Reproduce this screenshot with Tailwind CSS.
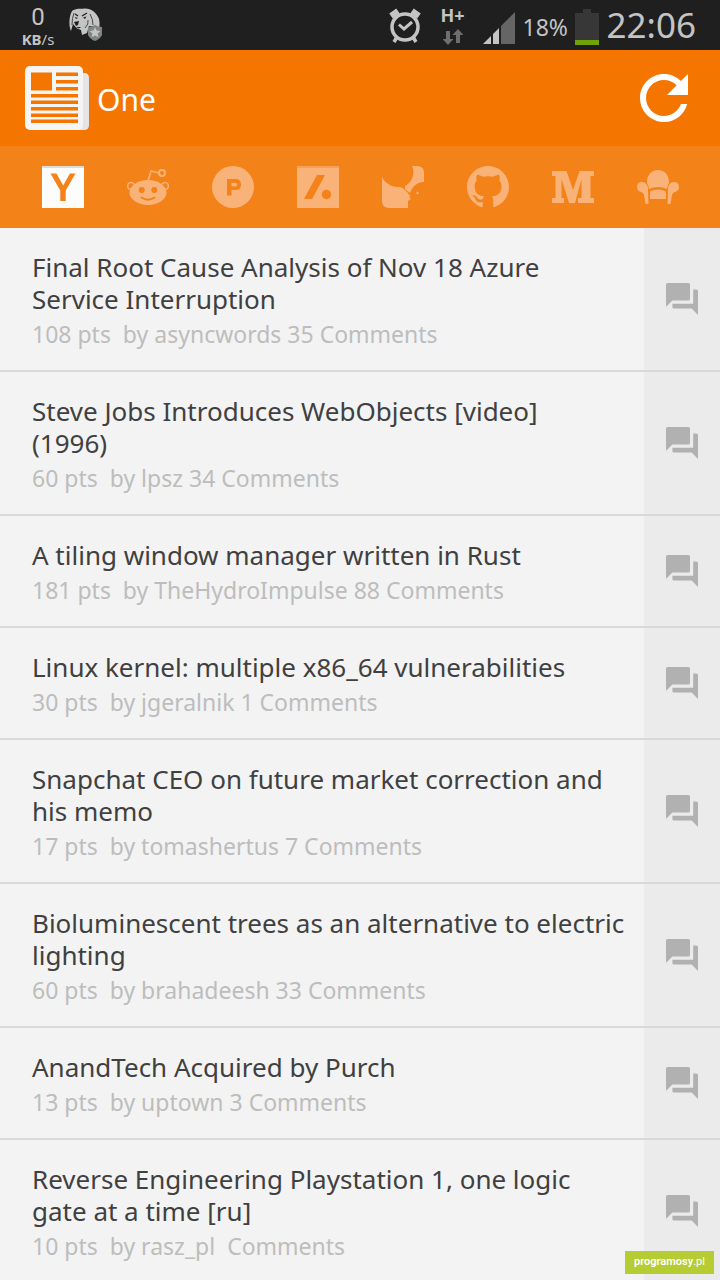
<!DOCTYPE html>
<html lang="en">
<head>
<meta charset="utf-8">
<meta name="viewport" content="width=device-width, initial-scale=1">
<title>One</title>
<script src="https://cdn.jsdelivr.net/npm/@tailwindcss/browser@4"></script>
</head>
<body class="bg-[#f3f3f3] font-['Noto_Sans',sans-serif]">
<svg class="hidden" aria-hidden="true">
  <symbol id="forum" viewBox="2 2 20 20"><path d="M21 6h-2v9H6v2c0 .55.45 1 1 1h11l4 4V7c0-.55-.45-1-1-1zm-4 6V3c0-.55-.45-1-1-1H3c-.55 0-1 .45-1 1v14l4-4h10c.55 0 1-.45 1-1z"/></symbol>
</svg>
<div class="h-screen overflow-hidden">
  <div class="flex h-[50px] items-center bg-[#1f1f1f] text-[#c4c4c4]">
    <div class="ml-5 flex w-9 flex-col items-center">
      <span class="font-['Roboto',sans-serif] text-2xl leading-7">0</span>
      <span class="text-[15px] leading-4 whitespace-nowrap"><b>KB</b>/s</span>
    </div>
    <svg class="ml-3 h-9 w-9" viewBox="0 0 36 36">
      <path d="M4 4C8 1 13 2 16 1.500C23 1 29 6 31 12C32 16 31.500 20 31 22L28 20L21 19L19 26L14 28L13 23L9 21.500L5 17L3 24C1 20 .5 10 4 4Z" fill="#c4c4c4"/>
      <path d="M6 6Q4 11 4 18M22 7Q25 12 25 18M20 13Q21 17 17 21" fill="none" stroke="#3a3a3a" stroke-width=".9"/>
      <path d="M7 7l3 2M14 9l5-3" stroke="#1f1f1f" stroke-width="1.300"/>
      <path d="M7 10l3 1-2 1zM15 10.500l3.500-1-1.500 2.500zM6 15l5-1-1 4-2 1zM8 20l5 0-2 1.500z" fill="#1f1f1f"/>
      <path d="M20 20q4 0 7-2 3 2 7 2v8q-2 4-7 6-5-2-7-6z" fill="#7e8584"/>
      <path d="M27 20l1.600 3.500 3.900.4-2.900 2.600.8 3.800-3.400-1.900-3.400 1.900.8-3.800-2.900-2.600 3.900-.4z" fill="#c4c4c4"/>
    </svg>
    <svg class="ml-auto h-9 w-9" viewBox="0 0 36 36" fill="none" stroke="#c4c4c4">
      <circle cx="18" cy="20" r="13" stroke-width="3.500"/>
      <path d="M12 17.500l5 4.500 8-7" stroke-width="3"/>
      <path d="M10 30l-3 5M26 30l3 5" stroke-width="3.500"/>
      <path d="M4 9L11 4M32 9L25 4" stroke-width="6"/>
    </svg>
    <div class="ml-4 flex w-7 flex-col items-center">
      <span class="text-lg leading-5 font-bold">H+</span>
      <svg class="mt-1 h-4 w-5" viewBox="0 0 20 16" fill="#6e6e6e"><path d="M3 2h4v8h3.500L5 16-.5 10H3zM13 14h4V6h3.500L15 0 9.500 6H13z"/></svg>
    </div>
    <svg class="ml-4 mt-1 h-[33px] w-8" viewBox="0 0 32 33"><path d="M0 33l8-8v8zM10 23l6-6v16h-6z" fill="#c4c4c4"/><path d="M18 15L33 0v33H18z" fill="#656565"/></svg>
    <span class="ml-2 mt-1 w-12 text-[23px] whitespace-nowrap">18%</span>
    <svg class="ml-1 mt-1 h-9 w-6" viewBox="0 0 24 36"><path d="M8 0h8v4h8v27H0V4h8z" fill="#373737"/><path d="M0 31h24v5H0z" fill="#71a209"/></svg>
    <span class="ml-2 mr-6 text-[35px]">22:06</span>
  </div>

  <header class="flex h-24 items-center bg-[#f47500] text-white">
    <svg class="ml-6 h-16 w-[65px]" viewBox="0 0 65 64">
      <path d="M58 7h2q5 0 5 5v47q0 5-5 5H54z" fill="#e5e5e5"/>
      <rect x="1" width="58" height="64" rx="5" fill="#f5f5f5"/>
      <path d="M7 6.500h21v18H7zM32 6.500h22v3.500H32zM32 14h22v3.500H32zM32 21h22v3.500H32zM7 28h47v3.500H7zM7 34.500h47V38H7zM7 41h47v3.500H7zM7 47.500h47V51H7zM7 53.500h47V57H7z" fill="#f47500"/>
    </svg>
    <h1 class="mt-1 ml-2 text-3xl">One</h1>
    <button class="ml-auto mr-5" aria-label="Refresh">
      <svg class="h-[72px] w-[72px]" viewBox="0 0 24 24" fill="currentColor"><path d="M17.650 6.350C16.200 4.900 14.210 4 12 4c-4.420 0-7.990 3.580-7.990 8s3.570 8 7.990 8c3.730 0 6.840-2.550 7.730-6h-2.080c-.82 2.330-3.040 4-5.650 4-3.310 0-6-2.690-6-6s2.690-6 6-6c1.660 0 3.140.69 4.220 1.780L13 11h7V4z"/></svg>
    </button>
  </header>

  <nav class="flex h-[82px] items-center bg-[#f38218] px-5 text-[#f9b277]">
    <button class="flex flex-1 justify-center" aria-label="Hacker News">
      <svg class="size-[42px]" viewBox="0 0 42 42"><path d="M0 0h42v42H0z" fill="#fcfcfc"/><path d="M0 0h42v2H0z" fill="#dcdcdc"/><path d="M8.500 7.500h6l6.700 12 6.700-12h5.600L23.700 24.500v10.500h-5.400V24.500z" fill="#f38218"/></svg>
    </button>
    <button class="flex flex-1 justify-center" aria-label="Reddit">
      <svg class="size-[42px]" viewBox="0 0 42 42" fill="currentColor"><path d="M21 15L24 5l8 2" fill="none" stroke="currentColor" stroke-width="1.700"/><circle cx="35" cy="7" r="3" fill="none" stroke="currentColor" stroke-width="2"/><circle cx="4" cy="20" r="3.400" fill="none" stroke="currentColor" stroke-width="1.500"/><circle cx="38" cy="20" r="3.400" fill="none" stroke="currentColor" stroke-width="1.500"/><ellipse cx="21" cy="26.500" rx="18.500" ry="12.500"/><circle cx="14.700" cy="24" r="3" fill="#f38218"/><circle cx="27.300" cy="24" r="3" fill="#f38218"/><path d="M14.500 31.500q6.500 4.500 13 0" fill="none" stroke="#f38218" stroke-width="1.800" stroke-linecap="round"/></svg>
    </button>
    <button class="flex flex-1 justify-center" aria-label="Product Hunt">
      <svg class="size-[42px]" viewBox="0 0 42 42"><circle cx="21" cy="21" r="21" fill="currentColor"/><path fill="#f38218" fill-rule="evenodd" d="M15 13h8.500q5.500 0 5.500 5.500T23.500 24H19.500v5.500H15zM19.500 16.700v3.800h3.700q2 0 2-1.900t-2-1.900z"/></svg>
    </button>
    <button class="flex flex-1 justify-center" aria-label="Slashdot">
      <svg class="size-[42px]" viewBox="0 0 42 42"><path d="M0 0h42v42H0z" fill="currentColor"/><path d="M0 0h42v2H0z" fill="#f6a05a"/><path d="M20 9h8L15 33H7z" fill="#f38218"/><circle cx="29.500" cy="28.500" r="4.700" fill="#f38218"/></svg>
    </button>
    <button class="flex flex-1 justify-center" aria-label="Designer News">
      <svg class="size-[42px]" viewBox="0 0 42 42" fill="currentColor"><path d="M0 11C3 17 9 21 16 21C19 21 21 22 23 24L26 27L27 29L29 30L27 31L29 33L26 35V42H7Q0 42 0 35zM30 0h5q7 0 7 7v9c-7 0-11 4-14 11L23 23V20C29 17 34 8 30 0z"/><circle cx="35.500" cy="27" r="1.200"/></svg>
    </button>
    <button class="flex flex-1 justify-center" aria-label="GitHub">
      <svg class="size-[42px]" viewBox="0 0 16 16" fill="currentColor"><path d="M8 0C3.580 0 0 3.580 0 8c0 3.540 2.290 6.530 5.470 7.590.4.070.55-.17.55-.38 0-.19-.01-.82-.01-1.490-2.010.37-2.530-.49-2.690-.94-.09-.23-.48-.94-.82-1.130-.28-.15-.68-.52-.01-.53.63-.01 1.080.58 1.230.82.72 1.210 1.870.87 2.330.66.070-.52.28-.87.51-1.070-1.780-.2-3.640-.89-3.640-3.950 0-.87.31-1.590.82-2.150-.08-.2-.36-1.020.08-2.120 0 0 .67-.21 2.200.82.64-.18 1.320-.27 2-.27s1.360.09 2 .27c1.530-1.040 2.200-.82 2.200-.82.44 1.100.16 1.920.08 2.120.51.56.82 1.270.82 2.150 0 3.070-1.870 3.750-3.650 3.950.29.25.54.73.54 1.480 0 1.070-.01 1.930-.01 2.200 0 .21.15.46.55.38A8.010 8.010 0 0 0 16 8c0-4.420-3.580-8-8-8z"/></svg>
    </button>
    <button class="flex flex-1 justify-center" aria-label="Medium">
      <svg class="size-[42px]" viewBox="0 0 42 42" fill="currentColor"><path d="M0 5h14.500L21 24 27.500 5H42v5h-3.500v22H42v5H26v-5h3.500V13L23 37h-6L9.500 13v19H12v5H0v-5h3.500V10H0z"/></svg>
    </button>
    <button class="flex flex-1 justify-center" aria-label="Lounge">
      <svg class="size-[42px]" viewBox="0 0 42 42" fill="currentColor"><path d="M10 17C9 -0.500 33 -0.500 32 17Q31 18 30 23Q21 19 12 23Q11 18 10 17zM13 25.500Q21 21.500 29 25.500V33H13zM5 16q6 0 6 8l.5 14H8.500L7 29Q6 26 4 26Q0 25 0 21Q0 16 5 16zM37 16q-6 0-6 8l-.5 14h3L35 29Q36 26 38 26Q42 25 42 21Q42 16 37 16z"/></svg>
    </button>
  </nav>

  <main>
    <ul id="stories"></ul>
  </main>
  <template id="story">
    <li class="flex border-b-2 border-[#d9d9d9]">
      <div class="min-w-0 flex-1 pt-[23px] pr-3 pb-5 pl-8">
        <h2 class="text-[26px] leading-8 whitespace-pre-line text-[#404040]"><a href="#" class="title"></a></h2>
        <p class="meta mt-[3px] text-[23px] leading-8 whitespace-pre text-[#bdbdbd]"></p>
      </div>
      <button class="flex w-[76px] items-center justify-center bg-[#ebebeb] text-[#b1b1b1]" aria-label="Comments">
        <svg class="size-8" fill="currentColor"><use href="#forum"/></svg>
      </button>
    </li>
  </template>
</div>
<a href="#" class="fixed right-[6px] bottom-[6px] flex h-[23px] w-[89px] items-center justify-center bg-[#b5cd32] font-['Roboto',sans-serif] text-[11px] font-semibold text-white"><span>programosy<span class="font-normal">.pl</span></span></a>
<script>
const stories = [
  ["Final Root Cause Analysis of Nov 18 Azure Service Interruption", "108 pts  by asyncwords 35 Comments"],
  ["Steve Jobs Introduces WebObjects [video]\n(1996)", "60 pts  by lpsz 34 Comments"],
  ["A tiling window manager written in Rust", "181 pts  by TheHydroImpulse 88 Comments"],
  ["Linux kernel: multiple x86_64 vulnerabilities", "30 pts  by jgeralnik 1 Comments"],
  ["Snapchat CEO on future market correction and his memo", "17 pts  by tomashertus 7 Comments"],
  ["Bioluminescent trees as an alternative to electric lighting", "60 pts  by brahadeesh 33 Comments"],
  ["AnandTech Acquired by Purch", "13 pts  by uptown 3 Comments"],
  ["Reverse Engineering Playstation 1, one logic\ngate at a time [ru]", "10 pts  by rasz_pl  Comments"]
];
const tpl = document.getElementById("story");
for (const [title, meta] of stories) {
  const row = tpl.content.cloneNode(true);
  row.querySelector(".title").textContent = title;
  row.querySelector(".meta").textContent = meta;
  document.getElementById("stories").append(row);
}
</script>
</body>
</html>
